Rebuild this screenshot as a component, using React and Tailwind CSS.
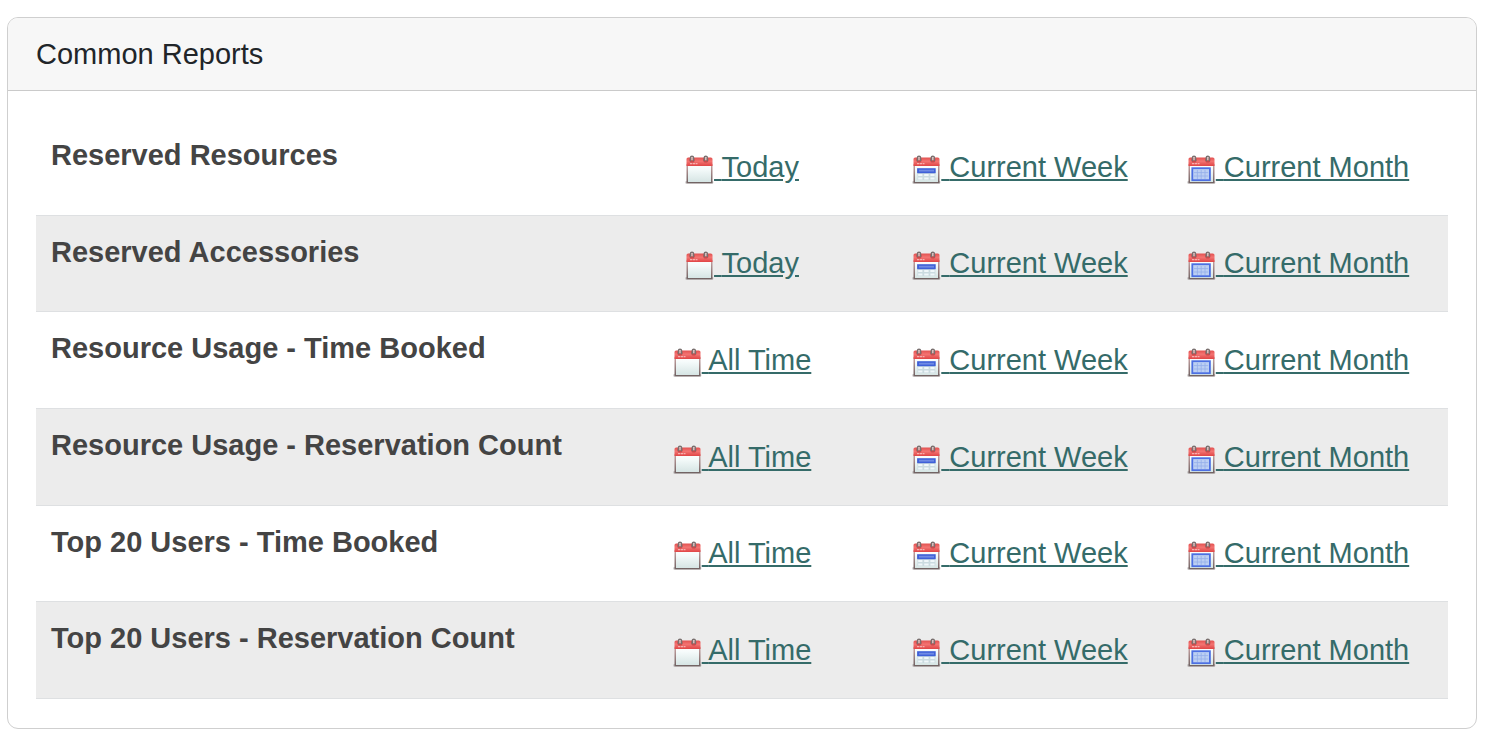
import React from "react";

function CalendarIcon({ kind }) {
  return (
    <svg
      viewBox="0 0 29 29"
      className="inline-block size-[29px] align-middle"
      aria-hidden="true"
    >
      <defs>
        <linearGradient id={`red-${kind}`} x1="0" y1="0" x2="0" y2="1">
          <stop offset="0" stopColor="#e2504f" />
          <stop offset="0.45" stopColor="#f37472" />
          <stop offset="1" stopColor="#e04546" />
        </linearGradient>
        <linearGradient id={`paper-${kind}`} x1="0" y1="0" x2="0" y2="1">
          <stop offset="0" stopColor="#ffffff" />
          <stop offset="0.3" stopColor="#f4fafa" />
          <stop offset="1" stopColor="#d6e5e4" />
        </linearGradient>
        <linearGradient id={`edge-${kind}`} x1="0" y1="0" x2="0" y2="1">
          <stop offset="0" stopColor="#c9a3a3" />
          <stop offset="1" stopColor="#6f6161" />
        </linearGradient>
      </defs>
      <rect x="0.3" y="26" width="28" height="2.8" rx="1" fill="#8a8080" opacity="0.45" />
      <path d="M1.5 9H27.5V28.3H1.5Z" fill={`url(#edge-${kind})`} />
      <path d="M3 9H26V27H3Z" fill={`url(#paper-${kind})`} />
      <path d="M1.5 11V4Q1.5 2.4 3.2 2.4H25.8Q27.5 2.4 27.5 4V11Z" fill={`url(#red-${kind})`} />
      <path d="M5 8.6H12.5" stroke="#fbc3c1" strokeWidth="1.2" strokeDasharray="2.2 0.6" opacity="0.8" />
      <g fill="#a62e31" opacity="0.55">
        <circle cx="7" cy="5" r="2.6" />
        <circle cx="20.8" cy="5" r="2.6" />
      </g>
      <g fill="none" stroke="#7a706f" strokeWidth="1.5" strokeLinecap="round">
        <path d="M5.5 5.4V2.6Q5.5 1.2 7 1.2T8.5 2.6V5.4" />
        <path d="M19.3 5.4V2.6Q19.3 1.2 20.8 1.2T22.3 2.6V5.4" />
      </g>
      <path d="M7 2V5.2M20.8 2V5.2" stroke="#d5cccb" strokeWidth="1.4" />
      {kind === "week" && (
        <g>
          <rect x="5.4" y="18" width="18" height="7" fill="#cbdbe0" />
          <path d="M6.2 20H10.4M12.2 20H16.6M18.4 20H22.6M6.2 23.4H10.4M12.2 23.4H16.6M18.4 23.4H22.6" stroke="#f0f7f9" strokeWidth="2" />
          <rect x="5.1" y="13.2" width="18.6" height="5" fill="#3f60d8" />
          <path d="M7 15.7H22" stroke="#6f8ae4" strokeWidth="1.8" />
        </g>
      )}
      {kind === "month" && (
        <g>
          <rect x="5.3" y="13.2" width="17.6" height="12" fill="#bccff3" stroke="#4c6fe2" strokeWidth="1.8" />
          <path d="M10.4 15V24M14.2 15V24M18 15V24M7 17.6H21.2M7 21H21.2" stroke="#94aeea" strokeWidth="0.8" />
        </g>
      )}
    </svg>
  );
}

const reports = [
  ["Reserved Resources", "Today"],
  ["Reserved Accessories", "Today"],
  ["Resource Usage - Time Booked", "All Time"],
  ["Resource Usage - Reservation Count", "All Time"],
  ["Top 20 Users - Time Booked", "All Time"],
  ["Top 20 Users - Reservation Count", "All Time"],
];

function ReportLink({ kind, children }) {
  return (
    <td className="p-0 text-center align-middle">
      <a href="#report" className="whitespace-nowrap text-[#356b69] underline">
        <CalendarIcon kind={kind} /> {children}
      </a>
    </td>
  );
}

export default function App() {
  return (
    <main className="bg-white pt-[17px] pr-[9px] pb-[15px] pl-[7px] font-['Liberation_Sans',Arial,sans-serif] text-[29px] leading-[44px]">
      <section className="overflow-hidden rounded-[11px] border border-[#cfcfcf] bg-white">
        <h1 className="border-b border-[#cacaca] bg-[#f7f7f7] px-7 py-[14px] text-[#212529]">
          Common Reports
        </h1>
        <div className="p-7 pb-[29px]">
          <table className="h-[580px] w-full table-fixed border-collapse">
            <colgroup>
              <col />
              <col className="w-[300px]" />
              <col className="w-[256px]" />
              <col className="w-[300px]" />
            </colgroup>
            <tbody>
              {reports.map(([name, first]) => (
                <tr key={name} className="border-b border-[#dee0e2] even:bg-[#ececec]">
                  <th scope="row" className="px-[15px] py-[14px] text-left align-top font-bold text-[#444444]">
                    {name}
                  </th>
                  <ReportLink kind="day">{first}</ReportLink>
                  <ReportLink kind="week">Current Week</ReportLink>
                  <ReportLink kind="month">Current Month</ReportLink>
                </tr>
              ))}
            </tbody>
          </table>
        </div>
      </section>
    </main>
  );
}
